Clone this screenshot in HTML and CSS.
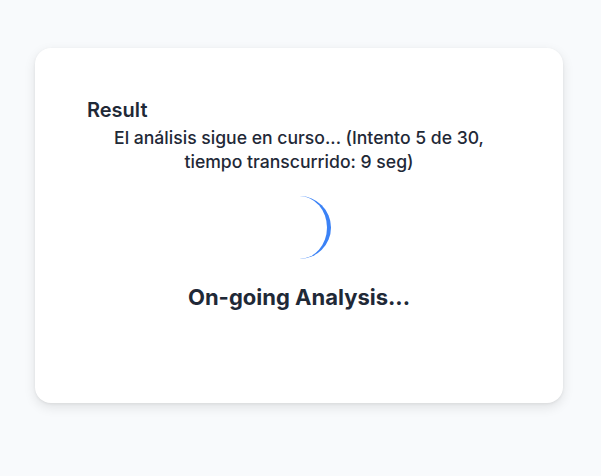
FILE: index.html
```html
<!DOCTYPE html>
<html>
<head>
<meta charset="utf-8">
<link rel="stylesheet" href="styles.css">
</head>
<body>
<main class="page">
  <section class="card">
    <div class="inner">
      <h2 class="title">Result</h2>
      <p class="status">El análisis sigue en curso... (Intento 5 de 30, tiempo transcurrido: 9 seg)</p>
      <div class="loader">
        <div class="spinner"></div>
        <h3 class="ongoing">On-going Analysis...</h3>
      </div>
    </div>
  </section>
</main>
</body>
</html>
```
FILE: styles.css
```css
* { box-sizing: border-box; }
html, body { margin: 0; padding: 0; }
body {
  background: #f8fafc;
  font-family: Inter, "Noto Sans", sans-serif;
  color: #1f2937;
  width: 601px;
  height: 476px;
}
.page {
  padding: 48px 38px 0 35px;
}
.card {
  background: #ffffff;
  border-radius: 16px;
  box-shadow: 0 4px 12px rgba(0,0,0,0.10), 0 1px 3px rgba(0,0,0,0.06);
  height: 355px;
  padding: 48px 52px;
}
.title {
  margin: 0;
  font-size: 20px;
  line-height: 28px;
  font-weight: 600;
}
.status {
  margin: 2px 0 0;
  font-size: 17.6px;
  line-height: 24px;
  font-weight: 500;
  text-align: center;
}
.loader {
  display: flex;
  flex-direction: column;
  align-items: center;
  margin-top: 22px;
}
.spinner {
  width: 63px;
  height: 63px;
  border-radius: 50%;
  border-right: 4.5px solid #3b82f6;
}
.ongoing {
  margin: 24px 0 0;
  font-size: 22px;
  line-height: 28px;
  font-weight: 700;
}
```
